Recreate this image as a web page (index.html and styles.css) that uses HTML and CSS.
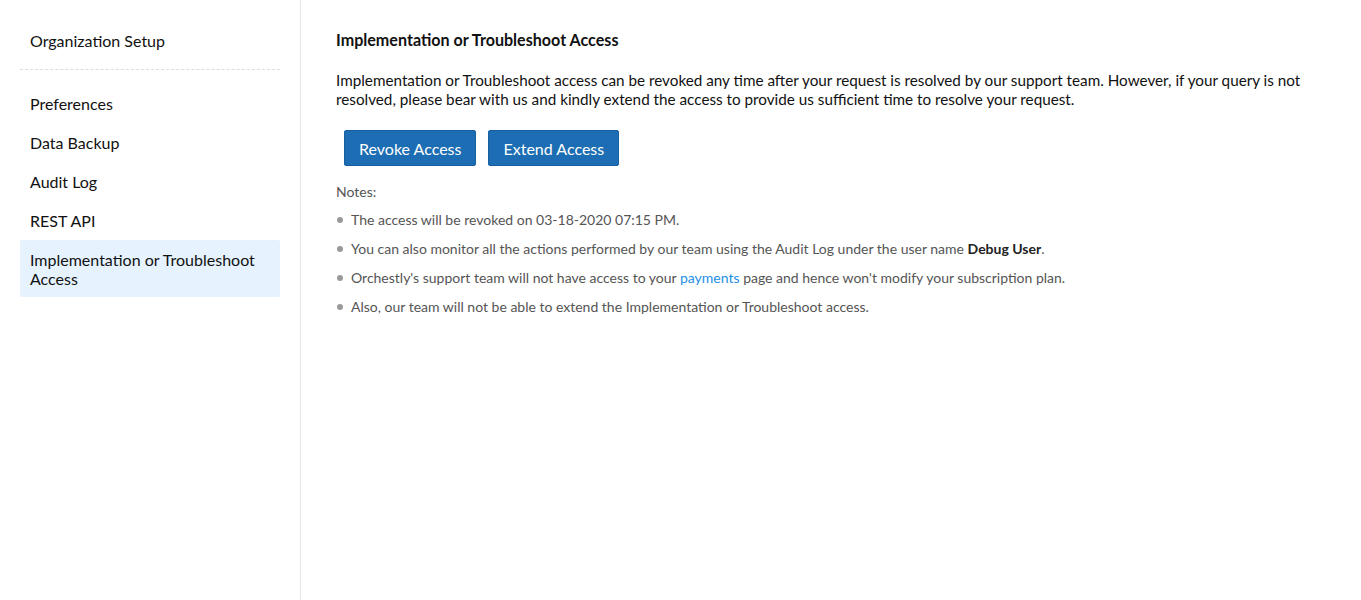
FILE: index.html
```html
<!DOCTYPE html>
<html>
<head>
<meta charset="utf-8">
<link rel="stylesheet" href="styles.css">
</head>
<body>
<div class="layout">
  <aside class="sidebar">
    <div class="org">Organization Setup</div>
    <div class="sep"></div>
    <ul class="menu">
      <li>Preferences</li>
      <li>Data Backup</li>
      <li>Audit Log</li>
      <li>REST API</li>
      <li class="active">Implementation or Troubleshoot Access</li>
    </ul>
  </aside>
  <main class="content">
    <h1 class="title">Implementation or Troubleshoot Access</h1>
    <p class="desc">Implementation or Troubleshoot access can be revoked any time after your request is resolved by our support team. However, if your query is not resolved, please bear with us and kindly extend the access to provide us sufficient time to resolve your request.</p>
    <div class="actions">
      <button class="btn">Revoke Access</button>
      <button class="btn">Extend Access</button>
    </div>
    <div class="notes-label">Notes:</div>
    <ul class="notes">
      <li>The access will be revoked on 03-18-2020 07:15 PM.</li>
      <li>You can also monitor all the actions performed by our team using the Audit Log under the user name <b>Debug User</b>.</li>
      <li>Orchestly's support team will not have access to your <a href="#">payments</a> page and hence won't modify your subscription plan.</li>
      <li>Also, our team will not be able to extend the Implementation or Troubleshoot access.</li>
    </ul>
  </main>
</div>
</body>
</html>
```
FILE: styles.css
```css
* { box-sizing: border-box; }
html, body { margin: 0; padding: 0; background: #fff; }
body {
  font-family: Lato, "Open Sans", sans-serif;
  color: #111;
  width: 1361px;
  height: 600px;
  overflow: hidden;
}
.layout { display: flex; height: 600px; }
.sidebar {
  width: 301px;
  flex: none;
  border-right: 1px solid #e6e6e6;
  padding: 20px 20px 0 20px;
}
.org {
  font-size: 16px;
  line-height: 20px;
  padding: 11px 10px 9px;
}
.sep {
  border-top: 1px dashed #dcdcdc;
  margin: 9px 0 14px;
}
.menu { list-style: none; margin: 0; padding: 0; }
.menu li {
  font-size: 16px;
  line-height: 19px;
  padding: 10px 10px;
  border-radius: 2px;
}
.menu li.active {
  background: #e6f3ff;
  padding: 10px 10px 9px;
}
.content {
  flex: 1;
  padding: 30px 35px 0 35px;
}
.title {
  margin: 0;
  font-size: 16.1px;
  font-weight: 700;
  line-height: 19px;
}
.desc {
  margin: 22px 0 0;
  font-size: 15.25px;
  line-height: 19px;
}
.actions {
  display: flex;
  gap: 12px;
  margin: 21px 0 0 8px;
}
.btn {
  font-family: inherit;
  font-size: 16px;
  color: #fff;
  background: #1c6db3;
  border: 1px solid #1760a0;
  border-radius: 2px;
  height: 36px;
  padding: 0 14px;
  cursor: pointer;
}
.notes-label {
  margin-top: 17px;
  font-size: 14px;
  line-height: 18px;
  color: #555;
}
.notes {
  list-style: none;
  margin: 10px 0 0;
  padding: 0;
}
.notes li {
  position: relative;
  font-size: 14px;
  line-height: 18px;
  color: #555;
  padding-left: 15px;
  margin-bottom: 11px;
}
.notes li::before {
  content: "";
  position: absolute;
  left: 1px;
  top: 6px;
  width: 6px;
  height: 6px;
  border-radius: 50%;
  background: #9a9a9a;
}
.notes b { color: #222; font-weight: 700; }
.notes a { color: #1e8fe6; text-decoration: none; }
```
